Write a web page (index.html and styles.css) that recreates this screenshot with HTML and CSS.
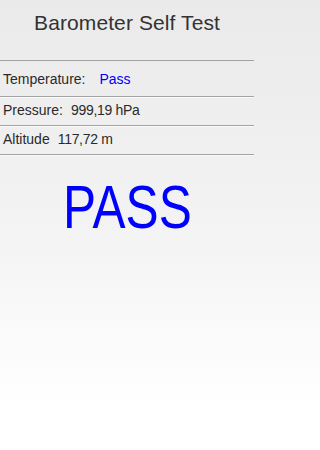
FILE: index.html
```html
<!DOCTYPE html>
<html>
<head>
<meta charset="utf-8">
<link rel="stylesheet" href="styles.css">
</head>
<body>
<div class="screen">
  <header class="header"><h1 class="title">Barometer Self Test</h1></header>
  <div class="rows">
    <div class="row row-first"><span class="label">Temperature:</span><span class="value pass">Pass</span></div>
    <div class="row"><span class="label">Pressure:</span><span class="value">999,19 hPa</span></div>
    <div class="row"><span class="label">Altitude</span><span class="value">117,72 m</span></div>
  </div>
  <div class="result"><span class="result-text">PASS</span></div>
</div>
</body>
</html>
```
FILE: styles.css
```css
html, body {
  margin: 0;
  padding: 0;
}
html {
  background: linear-gradient(to bottom, #eaeaea 0%, #f3f3f3 50%, #ffffff 90%);
  min-height: 450px;
}
body {
  width: 254px;
  height: 450px;
  overflow: hidden;
  font-family: "Liberation Sans", sans-serif;
  color: #2a2a2a;
}
.screen {
  display: flex;
  flex-direction: column;
}
.header {
  height: 60px;
  display: flex;
  justify-content: center;
  box-sizing: border-box;
  padding-top: 10px;
}
.title {
  margin: 0;
  font-weight: normal;
  font-size: 21px;
  line-height: 26px;
  letter-spacing: 0.1px;
  color: #333;
}
.rows {
  border-top: 1px solid #a3a3a3;
}
.row {
  height: 28px;
  box-sizing: content-box;
  display: flex;
  align-items: center;
  padding-left: 3px;
  padding-bottom: 0;
  font-size: 14px;
  border-bottom: 1px solid #a3a3a3;
  box-shadow: 0 1px 0 #fafafa;
  color: #2a2a2a;
}
.row + .row {
  height: 25px;
  padding-bottom: 3px;
}
.row-first {
  height: 35px;
}
.label {
  margin-right: 8px;
}
.row-first .label {
  margin-right: 14px;
}
.value {
  letter-spacing: -0.3px;
}
.pass {
  color: #0000ff;
  letter-spacing: 0;
}
.result {
  margin-top: 17px;
  display: flex;
  justify-content: center;
  font-size: 62px;
  line-height: 70px;
  color: #0000ff;
}
.result-text {
  display: inline-block;
  transform: scaleX(0.8);
}
```
